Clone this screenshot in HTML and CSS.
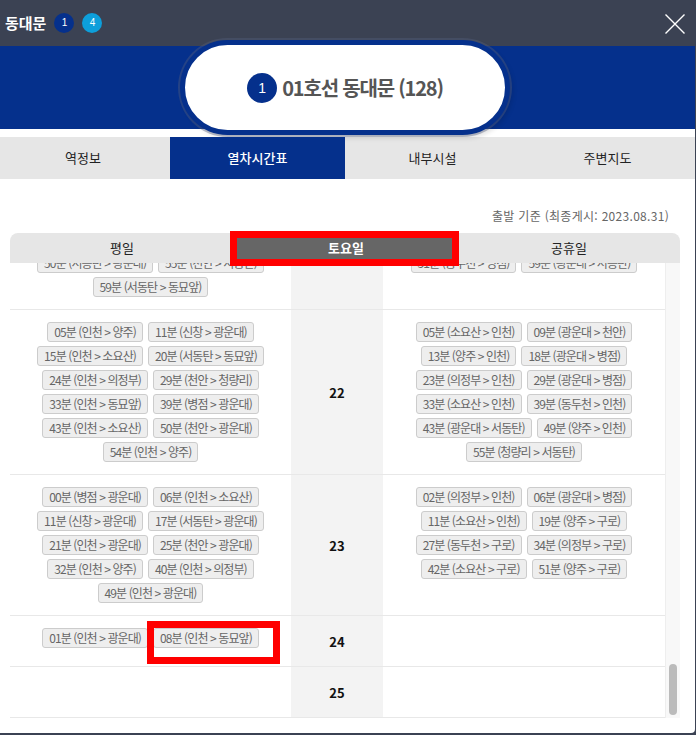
FILE: index.html
```html
<!DOCTYPE html>
<html lang="ko">
<head>
<meta charset="utf-8">
<title>동대문</title>
<link rel="stylesheet" href="styles.css">
</head>
<body>
<div class="modal">
  <header class="top">
    <h1 class="title">동대문</h1>
    <span class="badge line1">1</span>
    <span class="badge line4">4</span>
    <svg class="close" width="20" height="20" viewBox="0 0 20 20"><path d="M.5.5 19.5 19.5M19.5.5 .5 19.5" stroke="#fff" stroke-width="1.4" fill="none"/></svg>
  </header>
  <div class="band">
    <div class="pill">
      <span class="pill-badge">1</span>
      <span class="pill-text">01호선 동대문 (128)</span>
    </div>
  </div>
  <nav class="tabs">
    <a class="tab first">역정보</a>
    <a class="tab active">열차시간표</a>
    <a class="tab">내부시설</a>
    <a class="tab">주변지도</a>
  </nav>
  <p class="note">출발 기준 (최종게시: 2023.08.31)</p>
  <section class="table">
    <div class="thead">
      <div class="th">평일</div>
      <div class="th sat">토요일<span class="mark-head"></span></div>
      <div class="th">공휴일</div>
    </div>
    <div class="tbody">
      <div class="rows">
        <div class="rows-inner">
          <div class="row">
            <div class="cell"><span class="t">50분 (서동탄 &gt; 광운대)</span><span class="t">55분 (천안 &gt; 서동탄)</span><span class="t">59분 (서동탄 &gt; 동묘앞)</span></div>
            <div class="hour"></div>
            <div class="cell"><span class="t">51분 (동두천 &gt; 병점)</span><span class="t">59분 (광운대 &gt; 서동탄)</span></div>
          </div>
          <div class="row">
            <div class="cell"><span class="t">05분 (인천 &gt; 양주)</span><span class="t">11분 (신창 &gt; 광운대)</span><span class="t">15분 (인천 &gt; 소요산)</span><span class="t">20분 (서동탄 &gt; 동묘앞)</span><span class="t">24분 (인천 &gt; 의정부)</span><span class="t">29분 (천안 &gt; 청량리)</span><span class="t">33분 (인천 &gt; 동묘앞)</span><span class="t">39분 (병점 &gt; 광운대)</span><span class="t">43분 (인천 &gt; 소요산)</span><span class="t">50분 (천안 &gt; 광운대)</span><span class="t">54분 (인천 &gt; 양주)</span></div>
            <div class="hour">22</div>
            <div class="cell"><span class="t">05분 (소요산 &gt; 인천)</span><span class="t">09분 (광운대 &gt; 천안)</span><span class="t">13분 (양주 &gt; 인천)</span><span class="t">18분 (광운대 &gt; 병점)</span><span class="t">23분 (의정부 &gt; 인천)</span><span class="t">29분 (광운대 &gt; 병점)</span><span class="t">33분 (소요산 &gt; 인천)</span><span class="t">39분 (동두천 &gt; 인천)</span><span class="t">43분 (광운대 &gt; 서동탄)</span><span class="t">49분 (양주 &gt; 인천)</span><span class="t">55분 (청량리 &gt; 서동탄)</span></div>
          </div>
          <div class="row">
            <div class="cell"><span class="t">00분 (병점 &gt; 광운대)</span><span class="t">06분 (인천 &gt; 소요산)</span><span class="t">11분 (신창 &gt; 광운대)</span><span class="t">17분 (서동탄 &gt; 광운대)</span><span class="t">21분 (인천 &gt; 광운대)</span><span class="t">25분 (천안 &gt; 광운대)</span><span class="t">32분 (인천 &gt; 양주)</span><span class="t">40분 (인천 &gt; 의정부)</span><span class="t">49분 (인천 &gt; 광운대)</span></div>
            <div class="hour">23</div>
            <div class="cell"><span class="t">02분 (의정부 &gt; 인천)</span><span class="t">06분 (광운대 &gt; 병점)</span><span class="t">11분 (소요산 &gt; 인천)</span><span class="t">19분 (양주 &gt; 구로)</span><span class="t">27분 (동두천 &gt; 구로)</span><span class="t">34분 (의정부 &gt; 구로)</span><span class="t">42분 (소요산 &gt; 구로)</span><span class="t">51분 (양주 &gt; 구로)</span></div>
          </div>
          <div class="row">
            <div class="cell"><span class="t">01분 (인천 &gt; 광운대)</span><span class="t marked">08분 (인천 &gt; 동묘앞)<span class="mark-btn"></span></span></div>
            <div class="hour">24</div>
            <div class="cell"></div>
          </div>
          <div class="row">
            <div class="cell"></div>
            <div class="hour">25</div>
            <div class="cell"></div>
          </div>
        </div>
      </div>
      <div class="track"><div class="thumb"></div></div>
    </div>
  </section>
</div>
</body>
</html>
```
FILE: styles.css
```css
* { box-sizing: border-box; }
html, body { margin: 0; padding: 0; }
body {
  width: 696px;
  height: 735px;
  overflow: hidden;
  background: #3b4253;
  font-family: "Noto Sans CJK KR", "Noto Sans", sans-serif;
}
.modal {
  width: 695px;
  height: 733px;
  background: #fff;
  border-radius: 0 0 4px 0;
  overflow: hidden;
}
.top {
  height: 46px;
  background: #3b4253;
  display: flex;
  align-items: center;
  padding-left: 5px;
}
.title {
  margin: 0 8px 0 0;
  color: #fff;
  font-size: 15px;
  font-weight: 700;
  letter-spacing: 0;
  line-height: 20px;
}
.badge {
  width: 20px;
  height: 20px;
  border-radius: 50%;
  margin-right: 8px;
  color: #fff;
  font-size: 10px;
  line-height: 20px;
  text-align: center;
  font-family: "Liberation Sans", sans-serif;
}
.line1 { background: #05308c; }
.line4 { background: #0d9fdb; }
.close { margin-left: auto; margin-right: 10px; margin-top: 1px; }
.band {
  height: 83px;
  background: #05308c;
  display: flex;
  justify-content: center;
  align-items: flex-start;
}
.pill {
  width: 330px;
  height: 95px;
  margin: -6px 5px 0 0;
  background: #fff;
  border: 5px solid #05308c;
  border-radius: 48px;
  box-shadow: 0 0 0 2px rgba(85, 95, 125, .4), 3px 3px 5px rgba(0, 0, 0, .12);
  display: flex;
  align-items: center;
  justify-content: center;
  gap: 5px;
}
.pill-badge {
  width: 30px;
  height: 30px;
  border-radius: 50%;
  background: #05308c;
  color: #fff;
  font-size: 14px;
  line-height: 30px;
  text-align: center;
  font-family: "Liberation Sans", sans-serif;
}
.pill-text {
  color: #555;
  font-size: 20px;
  font-weight: 700;
  letter-spacing: -1.2px;
  line-height: 30px;
}
.tabs {
  margin-top: 8px;
  height: 42px;
  background: #e6e6e6;
  display: grid;
  grid-template-columns: 170px 175px 175px 175px;
}
.tab {
  color: #222;
  font-size: 13px;
  line-height: 42px;
  text-align: center;
}
.tab.first { padding-right: 4px; }
.tab.active { background: #05308c; color: #fff; font-weight: 500; }
.note {
  margin: 28px 26px 8px 0;
  color: #666;
  font-size: 12px;
  line-height: 18px;
  letter-spacing: .3px;
  text-align: right;
}
.table { margin: 0 15px 0 10px; }
.thead {
  height: 30px;
  display: grid;
  grid-template-columns: 224px 224px 222px;
  background: #e6e6e6;
  border-radius: 8px 8px 0 0;
}
.th {
  color: #222;
  font-size: 13px;
  line-height: 30px;
  text-align: center;
  position: relative;
}
.th.sat { background: #666; color: #fff; font-weight: 700; }
.mark-head {
  position: absolute;
  left: -4px;
  right: -1px;
  top: -2px;
  bottom: -3px;
  border: 7px solid #f00;
}
.tbody {
  height: 455px;
  display: flex;
}
.rows { width: 655px; overflow: hidden; }
.rows-inner { margin-top: -22px; }
.row {
  display: grid;
  grid-template-columns: 281px 92px 282px;
  min-height: 51px;
  border-bottom: 1px solid #e8e8e8;
}
.cell {
  padding: 12px 0;
  display: flex;
  flex-wrap: wrap;
  justify-content: center;
  align-content: flex-start;
  gap: 4px 5px;
}
.hour {
  background: #f3f3f3;
  color: #111;
  font-size: 13px;
  font-weight: 700;
  display: flex;
  align-items: center;
  justify-content: center;
}
.t {
  height: 20px;
  padding: 0 6px;
  background: #eee;
  border: 1px solid #ccc;
  border-radius: 3px;
  color: #666;
  font-size: 12px;
  line-height: 17px;
  letter-spacing: -.9px;
  white-space: nowrap;
}
.marked { position: relative; }
.mark-btn {
  position: absolute;
  left: -7px;
  top: -8px;
  width: 133px;
  height: 43px;
  border: 7px solid #f00;
}
.track {
  width: 15px;
  height: 455px;
  background: #f8f8f8;
  border-left: 1px solid #eee;
  display: flex;
  flex-direction: column;
  justify-content: flex-end;
  align-items: center;
  padding-bottom: 3px;
}
.thumb {
  width: 8px;
  height: 51px;
  background: #bbb;
  border-radius: 4px;
}
```
